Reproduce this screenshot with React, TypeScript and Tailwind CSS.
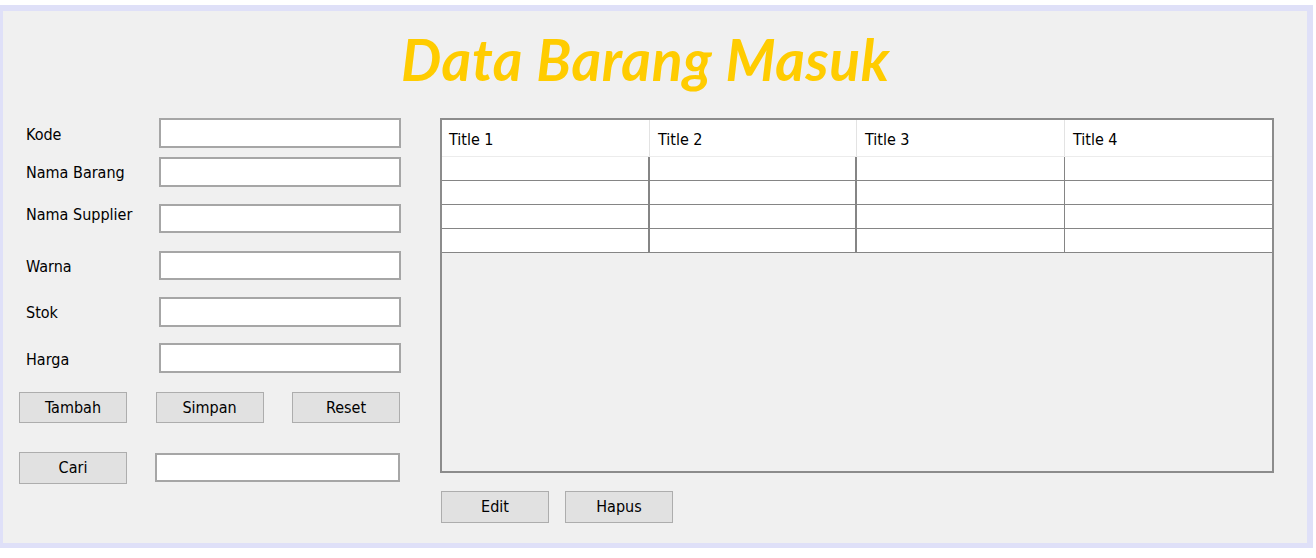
import React from "react";

const labelFont = { fontFamily: "'DejaVu Sans Condensed', 'DejaVu Sans', sans-serif" };

function Field({ w = "w-[242px]", h = "h-[30px]" }: { w?: string; h?: string }) {
  return <div className={`${w} ${h} shrink-0 border-2 border-[#a6a6a6] bg-white`} />;
}

function Btn({ label, h = "h-[31px]" }: { label: string; h?: string }) {
  return (
    <div
      className={`w-[108px] ${h} shrink-0 flex items-center justify-center bg-[#e1e1e1] border border-[#adadad] text-[16px] leading-[18px] text-black`}
    >
      {label}
    </div>
  );
}

function Row({
  label,
  mt,
  h,
  lab,
}: {
  label: string;
  mt: string;
  h: string;
  lab: string;
}) {
  return (
    <div className={`flex items-center ${mt}`}>
      <div className={`w-[140px] pl-[7px] text-[16px] leading-[18px] text-black whitespace-nowrap ${lab}`}>
        {label}
      </div>
      <Field h={h} />
    </div>
  );
}

export default function App() {
  const headCols = ["w-[208px]", "w-[207px]", "w-[208px]", "w-[207px]"];
  const bodyBorders = [
    "border-r-2 border-[#858585]",
    "border-r-2 border-[#858585]",
    "border-r border-[#858585]",
    "",
  ];
  return (
    <div className="w-[1316px] h-[558px] bg-white pt-[5px]" style={labelFont}>
      <div className="w-[1313px] h-[543px] border-t-[6px] border-l-[3px] border-r-[6px] border-b-[5px] border-[#dfe0f8] bg-[#f0f0f0] flex flex-col">
        {/* Title */}
        <div className="h-[107px] shrink-0 pt-[20px] pl-[398px]">
          <div
            className="text-[57px] leading-none font-bold italic tracking-[0.6px] text-[#ffcc00] whitespace-nowrap"
            style={{ fontFamily: "Lato, 'Open Sans', sans-serif" }}
          >
            Data Barang Masuk
          </div>
        </div>

        {/* Body */}
        <div className="flex pl-[16px]">
          {/* Left form */}
          <div className="w-[382px] shrink-0 flex flex-col">
            <Row label="Kode" mt="mt-0" h="h-[30px]" lab="pt-[4px]" />
            <Row label="Nama Barang" mt="mt-[9px]" h="h-[30px]" lab="pt-[2px]" />
            <Row label="Nama Supplier" mt="mt-[17px]" h="h-[29px]" lab="pb-[7px]" />
            <Row label="Warna" mt="mt-[18px]" h="h-[29px]" lab="pt-[3px]" />
            <Row label="Stok" mt="mt-[17px]" h="h-[30px]" lab="pt-[2px]" />
            <Row label="Harga" mt="mt-[16px]" h="h-[30px]" lab="pt-[4px]" />
            <div className="mt-[19px] w-[381px] flex justify-between">
              <Btn label="Tambah" />
              <Btn label="Simpan" />
              <Btn label="Reset" />
            </div>
            <div className="mt-[29px] flex items-start">
              <Btn label="Cari" h="h-[32px]" />
              <div className="ml-[28px] mt-[1px]">
                <Field w="w-[245px]" h="h-[29px]" />
              </div>
            </div>
          </div>

          {/* Right table */}
          <div className="ml-[39px] w-[834px] shrink-0 flex flex-col">
            <div className="h-[355px] border-2 border-[#8c8c8c] bg-[#f0f0f0] flex flex-col">
              <div className="h-[37px] shrink-0 flex bg-white border-b border-[#ececec]">
                {["Title 1", "Title 2", "Title 3", "Title 4"].map((t, i) => (
                  <div
                    key={t}
                    className={`${headCols[i]} shrink-0 h-full flex items-center pt-[3px] ${
                      i === 0 ? "pl-[7px]" : "pl-[8px]"
                    } ${i < 3 ? "border-r border-[#e3e3e3]" : ""} text-[16px] leading-[18px] text-black`}
                  >
                    {t}
                  </div>
                ))}
              </div>
              {[0, 1, 2, 3].map((r) => (
                <div key={r} className="h-[24px] shrink-0 flex bg-white border-b border-[#858585]">
                  {headCols.map((w, i) => (
                    <div key={i} className={`${w} shrink-0 h-full ${bodyBorders[i]}`} />
                  ))}
                </div>
              ))}
            </div>
            <div className="mt-[18px] pl-[1px] flex gap-[16px]">
              <Btn label="Edit" h="h-[32px]" />
              <Btn label="Hapus" h="h-[32px]" />
            </div>
          </div>
        </div>
      </div>
    </div>
  );
}
